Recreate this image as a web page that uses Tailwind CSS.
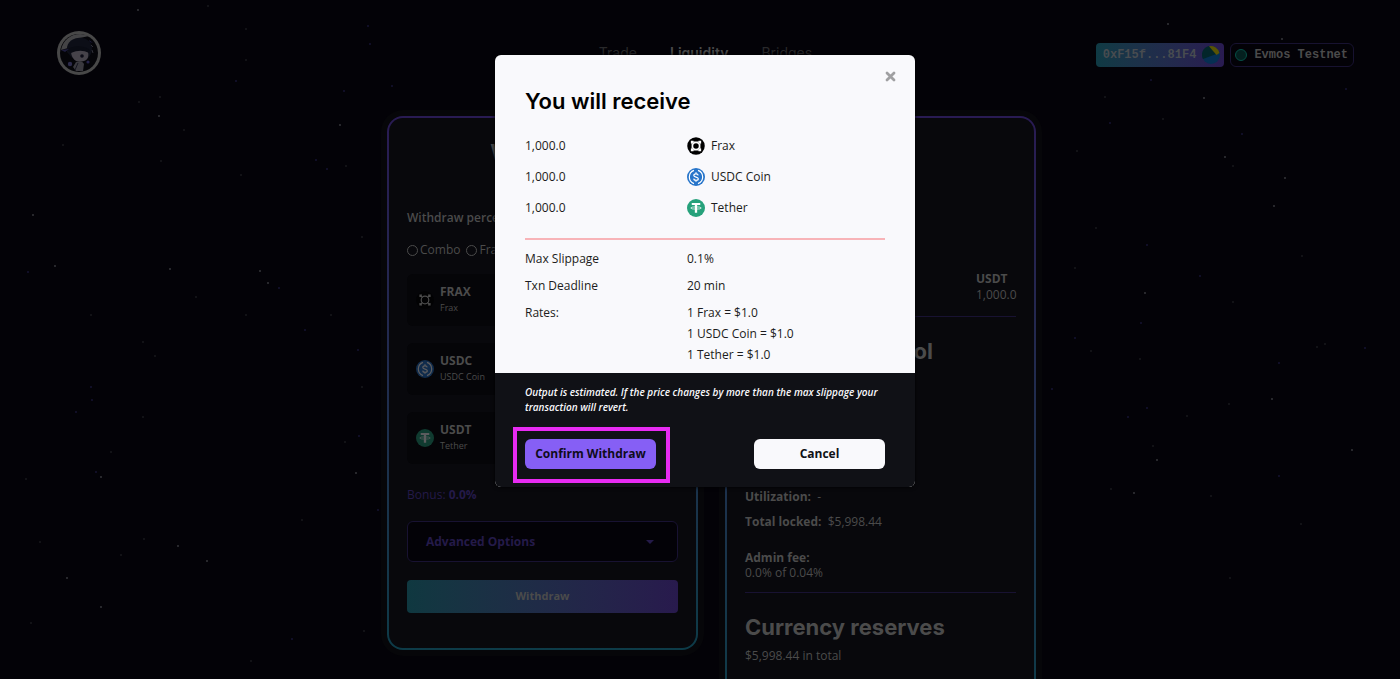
<!DOCTYPE html>
<html lang="en">
<head>
    <meta charset="UTF-8">
    <meta name="viewport" content="width=device-width, initial-scale=1.0">
    <title>Withdraw Liquidity</title>
    <!-- Tailwind CSS CDN -->
    <script src="https://cdn.jsdelivr.net/npm/@tailwindcss/browser@4"></script>
</head>
<body class="relative h-screen overflow-hidden bg-[#030207] font-['Open_Sans',sans-serif] text-xs text-[#4b4b4b]">

    <!-- Icon symbols -->
    <svg class="hidden" aria-hidden="true">
        <symbol id="frax" viewBox="0 0 36 36">
            <circle cx="18" cy="18" r="17.5" fill="#000"/>
            <g fill="none" stroke="currentColor" stroke-width="2.6">
                <circle cx="18" cy="18" r="6.8"/>
                <path d="M9 9l4 4M27 9l-4 4M9 27l4-4M27 27l-4-4"/>
                <path d="M9 13V9h4M23 9h4v4M27 23v4h-4M13 27H9v-4M13 10.5h10M13 25.5h10M10.5 13v10M25.5 13v10"/>
            </g>
        </symbol>
        <symbol id="frax-dim" viewBox="0 0 36 36">
            <circle cx="18" cy="18" r="17.5" fill="#020203"/>
            <g fill="none" stroke="currentColor" stroke-width="2.4">
                <circle cx="18" cy="18" r="7.6"/>
                <path d="M8 8l5 5M28 8l-5 5M8 28l5-5M28 28l-5-5M8 12V8h4M24 8h4v4M28 24v4h-4M12 28H8v-4"/>
            </g>
        </symbol>
        <symbol id="usdc" viewBox="0 0 36 36">
            <circle cx="18" cy="18" r="18" fill="#2775ca"/>
            <g fill="none" stroke="currentColor" stroke-width="2.4">
                <path d="M14 4.8a14 14 0 0 0 0 26.4M22 4.8a14 14 0 0 1 0 26.4"/>
                <path d="M22.4 14.6c-.4-2-2-3-4.4-3-2.600 0-4.400 1.200-4.400 3.200 0 4.400 9 2.200 9 6.600 0 2-1.900 3.200-4.600 3.200s-4.500-1.200-4.700-3.400M18 8.500v3M18 24.500v3"/>
            </g>
        </symbol>
        <symbol id="usdt" viewBox="0 0 36 36">
            <circle cx="18" cy="18" r="18" fill="#26a17b"/>
            <path d="M9.500 8h17v4.200h-6.200v15.300h-4.600V12.200H9.500z" fill="currentColor"/>
            <ellipse cx="18" cy="18" rx="10.500" ry="2.300" fill="none" stroke="currentColor" stroke-width="1.400"/>
        </symbol>
    </svg>

    <!-- Starfield -->
    <svg class="absolute inset-0 -z-10 h-full w-full" aria-hidden="true" fill="none" stroke-linecap="round" stroke-width="1.6">
        <path stroke="#5a5a5e" d="M138 10h0M159 116h0M340 125h0M33 215h0M55 266h0M170 269h0M260 271h0M268 283h0M101 477h0M356 473h0M178 546h0M207 561h0M67 578h0M101 607h0M1168 24h0M1282 39h0M1204 98h0M1225 157h0M1274 206h0M1285 178h0M1145 293h0M1134 493h0M1157 460h0M1272 399h0M1352 450h0"/>
        <path stroke="#29292c" d="M208 6h0M246 29h0M246 60h0M184 130h0M160 97h0M139 102h0M63 145h0M161 161h0M241 175h0M346 166h0M362 237h0M196 297h0M91 315h0M246 315h0M331 315h0M143 342h0M155 356h0M143 417h0M111 452h0M26 479h0M362 387h0M345 442h0M302 520h0M144 539h0M121 555h0M40 542h0M31 623h0M364 631h0M251 661h0M1105 97h0M1163 119h0M1077 151h0M1233 166h0M1096 228h0M1075 268h0M1302 256h0M1233 302h0M1325 344h0M1317 347h0M1091 351h0M1140 359h0M1187 416h0M1229 404h0M1153 446h0M1111 489h0M1301 524h0M1211 496h0M1230 578h0"/>
        <path stroke="#242052" d="M368 26h0M370 44h0M236 81h0M344 91h0M392 86h0M316 160h0M327 169h0M28 272h0M279 288h0M305 330h0M358 350h0M91 387h0M92 400h0M76 412h0M359 436h0M96 472h0M378 510h0M292 639h0M1151 80h0M1110 123h0M1242 134h0M1346 89h0M1147 245h0M1200 276h0M1141 323h0M1075 338h0M1279 363h0M1365 348h0M1052 389h0M1147 408h0M1128 417h0M1279 476h0"/>
    </svg>

    <!-- Header -->
    <header class="grid grid-cols-[1fr_auto_1fr] items-center pt-[31px] pr-[46px] pl-[57px]">
        <a href="#" aria-label="Home" class="w-11">
            <svg class="size-11" viewBox="0 0 44 44">
                <circle cx="22" cy="22" r="22" fill="#484848"/>
                <circle cx="22" cy="22" r="19" fill="#050509"/>
                <path d="M4 19C6 9 14 3 23 3c4 0 7 1 9 2L18 8l-7 9z" fill="#444446"/>
                <path d="M10 21c-1-8 3-13 11-14 8-1 15 4 14 12-1 5-3 8-6 9l-14-1z" fill="#0c0e17"/>
                <path d="M14 21c4-3 12-3 17 0 1 4 0 8-4 9-6 2-12 0-13-9z" fill="#46434a"/>
                <path d="M10 19c5-5 17-5 23 0l-1 3c-6-3-11-3-18 0z" fill="#090b13"/>
                <path d="M19 31c3-1 7-1 8 2l-1 7h-7l-3-4z" fill="#3a393f"/>
                <path d="M21 32l-3 7" stroke="#141420"/>
                <path d="M4 19l8-1-4 3zM32 9l4 3-3-1z" fill="#1d1c3c"/>
                <circle cx="25" cy="25" r="1.800" fill="#0b0b16"/>
                <circle cx="13" cy="33" r="2.200" fill="#2d2b4b"/>
                <circle cx="31" cy="31" r="1.600" fill="#25234a"/>
                <path d="M34 14l2 2M35 19l1 3" stroke="#303038"/>
            </svg>
        </a>
        <nav class="flex gap-[33px] font-['Inter',sans-serif] text-sm text-[#29292b]">
            <a href="#">Trade</a>
            <a href="#" class="font-semibold text-[#4b4b4b]">Liquidity</a>
            <a href="#">Bridges</a>
        </nav>
        <div class="mt-1 flex justify-end gap-1.5 font-['Liberation_Mono',monospace] text-xs font-bold">
            <button type="button" class="flex h-6 items-center gap-1.5 rounded bg-linear-to-r from-[#0f3a44] to-[#291b51] pr-1 pl-[7px] text-[#484c50]">
                0xF15f...81F4
                <svg class="size-[18px]" viewBox="0 0 18 18">
                    <circle cx="9" cy="9" r="9" fill="#062f52"/>
                    <path d="M1 13A9 9 0 0 1 7 0l10 7z" fill="#03262a"/>
                    <path d="M7 0.300a9 9 0 0 1 10.500 6.700l-3 2z" fill="#595404"/>
                </svg>
            </button>
            <button type="button" class="flex h-6 items-center gap-[7px] rounded-md border border-[#171230] pr-[5px] pl-1">
                <span class="size-3 rounded-full border border-[#064e45] bg-[#04201f]"></span>
                Evmos Testnet
            </button>
        </div>
    </header>

    <!-- Page cards -->
    <main class="mt-[41px] flex items-start justify-center gap-[27px] pl-[23px]">

        <!-- Withdraw card -->
        <section class="w-[311px] rounded-2xl bg-linear-to-b from-[#291b53] to-[#0d3b48] p-0.5 ring-6 ring-[#060609]">
            <form class="rounded-[14px] bg-[#08080c] px-[18px] pt-5 pb-[35px]">
                <h1 class="text-center font-['Inter',sans-serif] text-[22px] leading-7 font-bold">Withdraw</h1>
                <p class="mt-[43px] leading-[18px] font-semibold">Withdraw percentage</p>
                <div class="mt-3.5 flex items-center gap-1.5 leading-[18px] font-medium">
                    <label class="flex items-center gap-0.5"><input type="radio" name="mode" class="size-[11px] appearance-none rounded-full border border-[#4b4b4b]">Combo</label>
                    <label class="flex items-center gap-0.5"><input type="radio" name="mode" class="size-[11px] appearance-none rounded-full border border-[#4b4b4b]">Frax</label>
                </div>
                <ul class="mt-[15px] grid gap-[17px]">
                    <li class="flex h-[52px] items-center gap-1.5 rounded-md bg-[#050508] px-[9px]">
                        <svg class="size-[18px] text-[#4b4b4b]"><use href="#frax-dim"/></svg>
                        <div><p class="leading-4 font-bold">FRAX</p><p class="text-[9px] leading-4 font-medium">Frax</p></div>
                    </li>
                    <li class="flex h-[52px] items-center gap-1.5 rounded-md bg-[#050508] px-[9px]">
                        <svg class="size-[18px] text-white opacity-35"><use href="#usdc"/></svg>
                        <div><p class="leading-4 font-bold">USDC</p><p class="text-[9px] leading-4 font-medium">USDC Coin</p></div>
                    </li>
                    <li class="flex h-[52px] items-center gap-1.5 rounded-md bg-[#050508] px-[9px]">
                        <svg class="size-[18px] text-white opacity-35"><use href="#usdt"/></svg>
                        <div><p class="leading-4 font-bold">USDT</p><p class="text-[9px] leading-4 font-medium">Tether</p></div>
                    </li>
                </ul>
                <p class="mt-[22px] leading-[18px] text-[#241a49]">Bonus: <b>0.0%</b></p>
                <button type="button" class="mt-[17px] flex h-[41px] w-full items-center justify-between rounded-md border border-[#181232] bg-[#030207] pr-[23px] pl-[18px] font-bold text-[#241a49]">
                    Advanced Options
                    <svg class="h-1 w-2" viewBox="0 0 8 4"><path d="M0 0h8L4 4z" fill="currentColor"/></svg>
                </button>
                <button type="submit" class="mt-[18px] h-[33px] w-full rounded bg-linear-to-r from-[#0f3840] to-[#281a4d] text-[11px] font-bold">Withdraw</button>
            </form>
        </section>

        <!-- Pool card -->
        <section class="w-[311px] rounded-2xl bg-linear-to-b from-[#291b53] to-[#0d3b48] p-0.5 ring-6 ring-[#060609]">
            <div class="rounded-[14px] bg-[#08080c] px-[18px] pt-[153px] pb-9">
                <p class="ml-auto w-10 leading-4"><b>USDT</b><br>1,000.0</p>
                <hr class="mt-[13px] border-[#181232]">
                <h2 class="mt-[20px] font-['Inter',sans-serif] text-[22px] leading-7 font-bold">Kinesis Labs pool</h2>
                <p class="mt-[119px] leading-[25px]"><b>Utilization:</b>&nbsp; -</p>
                <p class="leading-[25px]"><b>Total locked:</b>&nbsp; $5,998.44</p>
                <p class="mt-4 leading-[15px]"><b>Admin fee:</b><br>0.0% of 0.04%</p>
                <hr class="mt-3 border-[#181232]">
                <h2 class="mt-[20px] font-['Inter',sans-serif] text-[22px] leading-7 font-bold">Currency reserves</h2>
                <p class="mt-1.5 leading-[18px]">$5,998.44 in total</p>
            </div>
        </section>
    </main>

    <!-- Confirm modal -->
    <div class="absolute inset-0 flex items-start justify-center pt-[55px] pl-2.5">
        <div role="dialog" aria-modal="true" aria-labelledby="modal-title" class="relative w-[420px] rounded-md bg-[#f9f9fc] text-[#1c1c20] shadow-[0_0_4px_#000]">
            <button type="button" aria-label="Close" class="absolute top-4 right-[19px]">
                <svg class="size-[11px]" viewBox="0 0 11 11"><path d="M2 2l7 7M9 2l-7 7" stroke="#a0a0a2" stroke-width="2.800" stroke-linecap="round"/></svg>
            </button>
            <div class="px-[30px] pt-8 pb-2">
                <h2 id="modal-title" class="font-['Inter',sans-serif] text-[22px] leading-7 font-semibold text-black">You will receive</h2>
                <dl class="mt-[22px] grid grid-cols-[162px_1fr] gap-y-[13px] leading-[18px]">
                    <dt>1,000.0</dt>
                    <dd class="flex items-center gap-1.5"><svg class="size-[18px] text-white"><use href="#frax"/></svg>Frax</dd>
                    <dt>1,000.0</dt>
                    <dd class="flex items-center gap-1.5"><svg class="size-[18px] text-white"><use href="#usdc"/></svg>USDC Coin</dd>
                    <dt>1,000.0</dt>
                    <dd class="flex items-center gap-1.5"><svg class="size-[18px] text-white"><use href="#usdt"/></svg>Tether</dd>
                </dl>
                <hr class="mt-[21px] border-t-2 border-[#f8b4b8]">
                <dl class="mt-2 grid grid-cols-[162px_1fr] gap-y-1.5 leading-[21px]">
                    <dt>Max Slippage</dt>
                    <dd>0.1%</dd>
                    <dt>Txn Deadline</dt>
                    <dd>20 min</dd>
                    <dt>Rates:</dt>
                    <dd>1 Frax = $1.0<br>1 USDC Coin = $1.0<br>1 Tether = $1.0</dd>
                </dl>
            </div>
            <div class="rounded-b-md bg-[#101116] px-[30px] pt-3 pb-[18px]">
                <p class="text-[10px] leading-[15px] font-semibold text-[#f9f9fc] italic">Output is estimated. If the price changes by more than the max slippage your transaction will revert.</p>
                <div class="mt-6 flex justify-between text-xs font-bold">
                    <div class="relative">
                        <button type="button" class="h-[30px] w-[131px] rounded-md bg-[#865ff5] text-[#0f0c1c]">Confirm Withdraw</button>
                        <!-- Highlight frame -->
                        <div class="pointer-events-none absolute -top-3 -right-3.5 -bottom-3.5 -left-3 border-4 border-[#e72bf2]"></div>
                    </div>
                    <button type="button" class="h-[30px] w-[131px] rounded-md bg-[#f9f9fc] text-[#101116]">Cancel</button>
                </div>
            </div>
        </div>
    </div>
</body>
</html>
